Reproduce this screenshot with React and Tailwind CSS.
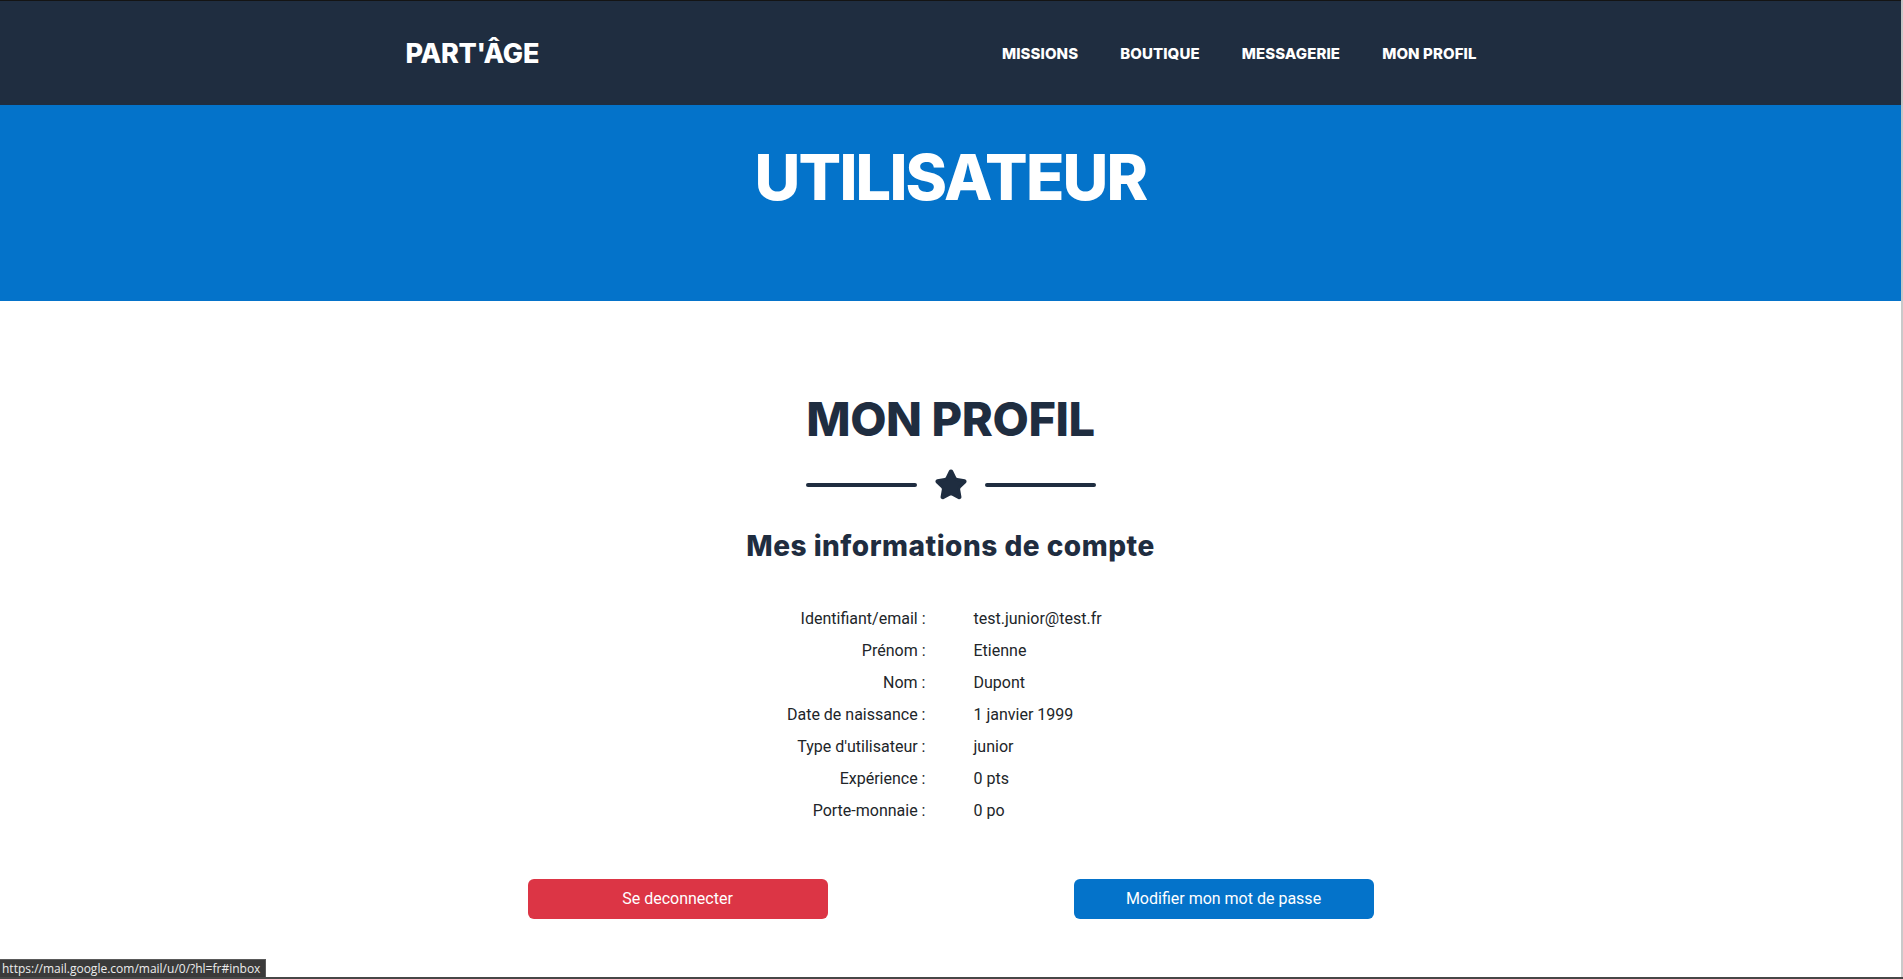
import { Star } from "lucide-react";

const infos = [
  ["Identifiant/email :", "test.junior@test.fr"],
  ["Prénom :", "Etienne"],
  ["Nom :", "Dupont"],
  ["Date de naissance :", "1 janvier 1999"],
  ["Type d'utilisateur :", "junior"],
  ["Expérience :", "0 pts"],
  ["Porte-monnaie :", "0 po"],
];

const links = ["MISSIONS", "BOUTIQUE", "MESSAGERIE", "MON PROFIL"];

const App = () => {
  return (
    <div className="h-screen flex flex-col overflow-hidden bg-white">
      <div className="flex flex-1 min-h-0">
        <div className="flex-1 flex flex-col">
          {/* barre du haut */}
          <div className="h-px bg-[#141414]"></div>
          <nav className="h-[104px] bg-[#1f2d40] flex items-center">
            <div className="w-[1140px] mx-auto flex items-center justify-between pl-[25px] pr-[44px]">
              <a className="text-white text-[27px] font-extrabold font-[Inter,sans-serif] tracking-[-0.3px] leading-none">
                PART'ÂGE
              </a>
              <ul className="flex items-center gap-[42px]">
                {links.map((l) => (
                  <li
                    key={l}
                    className="text-white text-[15px] font-extrabold font-[Inter,sans-serif] tracking-[0.1px] leading-none"
                  >
                    {l}
                  </li>
                ))}
              </ul>
            </div>
          </nav>

          {/* bandeau */}
          <header className="h-[196px] bg-[#0473ca] pt-[41px]">
            <h1 className="text-center text-white text-[63px] font-extrabold font-[Inter,sans-serif] leading-none tracking-[-1.8px]">
              UTILISATEUR
            </h1>
          </header>

          {/* contenu */}
          <main className="flex-1 flex flex-col items-center pt-[94px] font-[Roboto,sans-serif] text-[#212529]">
            <h2 className="text-[47px] font-extrabold font-[Inter,sans-serif] leading-none tracking-[-0.4px] text-[#1f2d40]">
              MON PROFIL
            </h2>
            <div className="flex items-center mt-[26px] h-[34px] text-[#1f2d40]">
              <div className="w-[111px] h-[4px] rounded-full bg-[#1f2d40]"></div>
              <Star
                size={34}
                fill="currentColor"
                strokeWidth={2}
                strokeLinejoin="round"
                className="mx-[17px]"
              />
              <div className="w-[111px] h-[4px] rounded-full bg-[#1f2d40]"></div>
            </div>
            <h3 className="mt-[30px] text-[28px] font-extrabold font-[Inter,sans-serif] leading-none tracking-[0.5px] text-[#1f2d40]">
              Mes informations de compte
            </h3>

            <div className="mt-[43px] grid grid-cols-2 w-[700px] text-[16px]">
              {infos.map(([label, value]) => (
                <div key={label} className="contents">
                  <div className="h-8 flex items-center justify-end pr-[25px]">
                    {label}
                  </div>
                  <div className="h-8 flex items-center pl-[23px]">{value}</div>
                </div>
              ))}
            </div>

            <div className="mt-[52px] w-[846px] flex justify-between">
              <button className="w-[300px] h-[40px] rounded-[6px] bg-[#dc3545] text-white text-[16px]">
                Se deconnecter
              </button>
              <button className="w-[300px] h-[40px] rounded-[6px] bg-[#0473ca] text-white text-[16px]">
                Modifier mon mot de passe
              </button>
            </div>
          </main>
        </div>
        {/* barre de défilement */}
        <div className="w-[2px] bg-[#c9c9c9]"></div>
      </div>
      <div className="h-[2px] bg-[#474747]"></div>

      {/* lien survolé */}
      <div className="fixed left-0 bottom-[2px] h-[18px] bg-[#3a3a3a] border-t border-r border-[#5a5a5a] flex items-center pl-[2px] pr-[5px] text-[12px] text-[#ececec] font-['Open_Sans',sans-serif] leading-none whitespace-nowrap">
        https://mail.google.com/mail/u/0/?hl=fr#inbox
      </div>
    </div>
  );
};

export default App;
